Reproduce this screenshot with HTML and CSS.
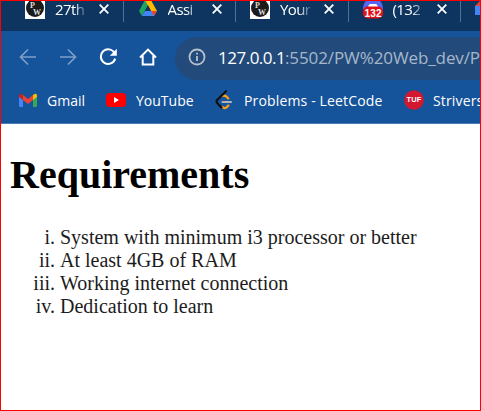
FILE: index.html
```html
<!DOCTYPE html>
<html lang="en">
<head>
<meta charset="utf-8">
<title>Requirements</title>
<link rel="stylesheet" href="styles.css">
</head>
<body>
<div class="window">
  <div class="tabs">
    <div class="tab">
      <svg class="fav" viewBox="0 0 20 20"><rect width="20" height="20" fill="#fff"/><circle cx="10" cy="9" r="9" fill="#1b1b1b"/><text class="pw" x="5" y="9">P</text><text class="pw" x="8" y="16">W</text></svg>
      <span class="name">27th</span>
      <svg class="close" viewBox="0 0 10 10"><path d="M.7.7l8.6 8.6M9.3.7L.7 9.3"/></svg>
    </div>
    <div class="tab">
      <svg class="fav" viewBox="0 0 20 20"><path fill="#1fa463" d="M6.9 1h6L4 17 1 12z"/><path fill="#ffba00" d="M6.9 1h6L19 12h-6z"/><path fill="#4285f4" d="M7 12h12l-3 5H4z"/><path fill="#ea4335" d="M13 12h6l-3 5z"/><path fill="#0d355f" d="M10 6.5l3 5.5H7z"/></svg>
      <span class="name">Assi</span>
      <svg class="close" viewBox="0 0 10 10"><path d="M.7.7l8.6 8.6M9.3.7L.7 9.3"/></svg>
    </div>
    <div class="tab">
      <svg class="fav" viewBox="0 0 20 20"><rect width="20" height="20" fill="#fff"/><circle cx="10" cy="9" r="9" fill="#1b1b1b"/><text class="pw" x="5" y="9">P</text><text class="pw" x="8" y="16">W</text></svg>
      <span class="name">Your</span>
      <svg class="close" viewBox="0 0 10 10"><path d="M.7.7l8.6 8.6M9.3.7L.7 9.3"/></svg>
    </div>
    <div class="tab">
      <svg class="fav" viewBox="0 0 20 20"><circle cx="10" cy="9" r="10" fill="#5865f2"/><path fill="#fff" d="M5 8c1-4 3-3 5-3s4-1 5 3z"/><rect y="7.5" width="20" height="12" rx="5" fill="#df1018"/><text class="count" x="1.5" y="17.5" textLength="17">132</text></svg>
      <span class="name">(132</span>
      <svg class="close" viewBox="0 0 10 10"><path d="M.7.7l8.6 8.6M9.3.7L.7 9.3"/></svg>
    </div>
    <div class="tab last">
      <svg class="fav" viewBox="0 0 20 20"><path fill="#ea4335" d="M0 7l5-5h15v5z"/><path fill="#4285f4" d="M0 7h20v9H0z"/></svg>
    </div>
  </div>
  <div class="toolbar">
    <svg class="nav dim" viewBox="0 0 18 18"><path d="M17 9H2M9 1.5L1.5 9 9 16.5"/></svg>
    <svg class="nav dim" viewBox="0 0 18 18"><path d="M1 9h15M9 1.5L16.5 9 9 16.5"/></svg>
    <svg class="nav" viewBox="0 0 18 18"><path d="M15.6 5.1A7.3 7.3 0 1 0 16.2 10.6"/><path class="solid" d="M17.8.8v7h-7z"/></svg>
    <svg class="nav" viewBox="0 0 18 18"><path d="M1 9.5L9 1.6l8 7.9M3.7 7.6v9h10.6v-9"/></svg>
    <div class="address">
      <svg class="info" viewBox="0 0 18 18"><circle cx="9" cy="9" r="7.5"/><path d="M9 8v5M9 4.7v1.8"/></svg>
      <span class="host">127.0.0.1</span><span class="path">:5502/PW%20Web_dev/P</span>
    </div>
  </div>
  <div class="bookmarks">
    <div class="mark gmail"><svg viewBox="0 0 20 16"><path fill="#4285f4" d="M1 4l4 3v8H2.2Q1 15 1 14z"/><path fill="#34a853" d="M15 7l4-3v10q0 1-1.2 1H15z"/><path fill="#fbbc04" d="M15 3q4-3 4 1v1l-4 3z"/><path fill="#c5221f" d="M1 4q0-4 4-1v5L1 5z"/><path fill="#ea4335" d="M5 3l5 4 5-4v5l-5 4-5-4z"/></svg><span>Gmail</span></div>
    <div class="mark youtube"><svg viewBox="0 0 20 16"><rect y="1" width="20" height="14" rx="3.5" fill="#f00"/><path fill="#fff" d="M8 5l5 3-5 3z"/></svg><span>YouTube</span></div>
    <div class="mark leetcode"><svg viewBox="0 0 18 20"><g fill="none" stroke-width="2.2" stroke-linecap="round"><path stroke="#ffa116" d="M7.5 5.8q2-.8 4 .8l1.7 1.8M7.5 17.2q2 1.6 4 .2l1.9-1.9"/><path stroke="#111" d="M11 1.2L2.2 10q-1.3 1.5 0 3l4.2 4.4"/><path stroke="#b3b3b3" d="M7.5 12H16"/></g></svg><span>Problems - LeetCode</span></div>
    <div class="mark striver"><svg viewBox="0 0 20 20"><circle cx="10" cy="10" r="9.8" fill="#d2172f"/><text class="tuf" x="2.5" y="12" textLength="15" lengthAdjust="spacingAndGlyphs">TUF</text></svg><span>Strivers</span></div>
  </div>
  <main class="page">
    <h1>Requirements</h1>
    <ol>
      <li>System with minimum i3 processor or better</li>
      <li>At least 4GB of RAM</li>
      <li>Working internet connection</li>
      <li>Dedication to learn</li>
    </ol>
  </main>
</div>
</body>
</html>
```
FILE: styles.css
```css
* { box-sizing: border-box; }
body { margin: 0; overflow: hidden; }
svg { display: block; flex: none; }
.window {
  width: 481px;
  height: 411px;
  border: 1px solid #f00;
  overflow: hidden;
  background: #fff;
  font-family: "Open Sans", "Noto Sans", sans-serif;
  color: #fff;
}
.tabs {
  height: 30px;
  padding-left: 10px;
  display: flex;
  background: #0d355f;
}
.tab {
  flex: none;
  width: 112.5px;
  height: 21px;
  padding-left: 14px;
  display: flex;
  border-right: 1px solid #536f8f;
}
.last { border: 0; }
.fav { width: 20px; height: 20px; margin-top: -2px; }
.name {
  width: 31px;
  height: 24px;
  margin: -4px 13px 0 10px;
  overflow: hidden;
  font-size: 15px;
  line-height: 24px;
  letter-spacing: -0.6px;
  white-space: nowrap;
  -webkit-mask-image: linear-gradient(90deg, #000 60%, rgba(0, 0, 0, .15));
  mask-image: linear-gradient(90deg, #000 60%, rgba(0, 0, 0, .15));
}
.close { width: 10px; height: 10px; margin-top: 3px; fill: none; stroke: #fff; stroke-width: 1.8; }
.pw { font: bold 8px "Liberation Serif", serif; fill: #ddd; }
.count { font: bold 10px "Liberation Sans", sans-serif; fill: #fff; }
.toolbar {
  height: 55px;
  padding-left: 18px;
  display: flex;
  align-items: center;
  gap: 22px;
  background: #15539a;
}
.nav { width: 18px; height: 18px; margin-top: -3px; fill: none; stroke: #fff; stroke-width: 2; }
.nav .solid { fill: #fff; stroke: none; }
.dim { stroke: #7d9fc8; stroke-width: 1.7; }
.address {
  flex: none;
  width: 360px;
  height: 43px;
  margin: -1px 0 0 -4px;
  padding: 0 0 2px 13px;
  border-radius: 22px;
  display: flex;
  align-items: center;
  background: #224b7b;
  font-size: 17px;
  white-space: nowrap;
}
.info { width: 18px; height: 18px; margin-right: 12px; fill: none; stroke: #b8c0cc; stroke-width: 1.8; }
.host { width: 67px; letter-spacing: -0.5px; }
.path { color: #a7b7ca; letter-spacing: -0.1px; }
.bookmarks {
  height: 38px;
  padding: 0 0 9px 17px;
  display: flex;
  align-items: center;
  background: #15539a;
  border-bottom: 1px solid #4b7cb4;
  font-size: 14px;
  letter-spacing: 0.15px;
  white-space: nowrap;
}
.mark { flex: none; display: flex; align-items: center; }
.gmail { width: 88px; letter-spacing: 0; }
.gmail svg { width: 20px; height: 16px; margin-right: 9px; }
.youtube { width: 109px; letter-spacing: 0; }
.youtube svg { width: 20px; height: 16px; margin-right: 10px; }
.leetcode { width: 189px; }
.leetcode svg { width: 18px; height: 20px; margin-right: 11px; }
.striver svg { width: 20px; height: 20px; margin-right: 9px; }
.tuf { font: bold 7px "Liberation Sans", sans-serif; fill: #fff; }
.page {
  padding: 28px 9px 0;
  color: #000;
  font: 20px/23px "Liberation Serif", serif;
}
h1 { margin: 0 0 28px; font-size: 40px; line-height: 46px; }
ol { margin: 0; padding-left: 50px; list-style: lower-roman; }
li { color: #1c1c1c; }
```
